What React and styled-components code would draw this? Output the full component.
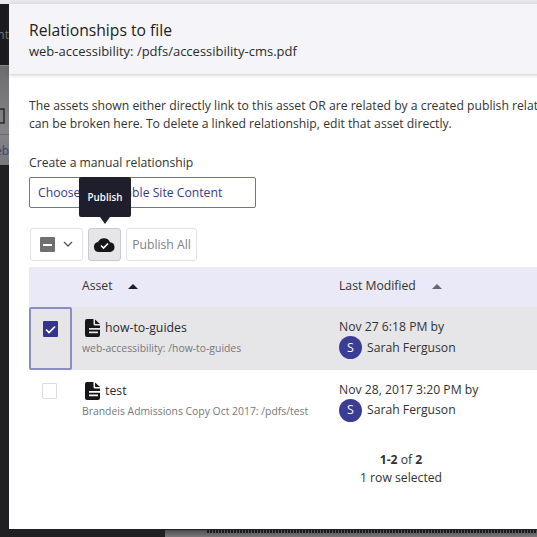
import React from 'react';
import styled, { createGlobalStyle } from 'styled-components';

const GlobalStyle = createGlobalStyle`
  html, body {
    margin: 0;
    padding: 0;
    width: 537px;
    height: 537px;
    overflow: hidden;
    background: #1f1f22;
  }
  * { box-sizing: border-box; }
`;

// Dimmed page behind the modal
const Page = styled.div`
  position: relative;
  width: 537px;
  height: 537px;
  overflow: hidden;
  background: #202023;
  font-family: 'Open Sans', 'Noto Sans', sans-serif;
  color: #2b2b2e;
`;

const BackdropTop = styled.div`
  position: absolute;
  left: 0;
  top: 0;
  right: 0;
  height: 4px;
  background: #e9e9ec;
`;

// Bits of the page under the modal that stick out on the left
const BackdropNav = styled.div`
  position: absolute;
  left: 0;
  top: 4px;
  width: 9px;
  height: 61px;
  overflow: hidden;
  background: #1b1b1f;
`;

const BackdropStrip = styled.div`
  position: absolute;
  left: 0;
  top: 65px;
  width: 9px;
  height: 100px;
  overflow: hidden;
  background: linear-gradient(#6d6d6f, #858587 68%, #77777f);
  border-top: 1px solid #8a898c;
`;

const BackdropDivider = styled.div`
  position: absolute;
  left: 0;
  right: 0;
  top: 68px;
  height: 1px;
  background: #6a6a6e;
`;

const BackdropText = styled.span`
  position: absolute;
  right: 0;
  top: ${({ $top }) => $top}px;
  font-size: 12px;
  line-height: 16px;
  white-space: nowrap;
  color: ${({ $color }) => $color};
`;

const BackdropIcon = styled.svg`
  position: absolute;
  left: -5px;
  top: 42px;
`;

const BackdropBottom = styled.div`
  position: absolute;
  left: 165px;
  right: 0;
  top: 530px;
  height: 7px;
  padding: 0 0 0 42px;
  background: linear-gradient(#4c4c4e, #7a7a7c);
  &::after {
    content: '';
    display: block;
    height: 3px;
    background: repeating-linear-gradient(90deg, #1c1c1e 0 2px, transparent 2px 3px);
  }
`;

const Modal = styled.div`
  position: absolute;
  left: 9px;
  top: 4px;
  width: 640px;
  height: 525px;
  background: #fff;
  display: flex;
  flex-direction: column;
`;

const ModalHeader = styled.header`
  height: 70px;
  padding: 15px 0 0 20px;
  background: #f5f5f9;
  box-shadow: 0 1px 4px rgba(60, 60, 70, 0.28);
`;

const Title = styled.h1`
  margin: 0;
  font-size: 15.7px;
  line-height: 22px;
  font-weight: 400;
  color: #222;
`;

const Subtitle = styled.div`
  font-size: 13px;
  line-height: 20px;
  color: #2b2b2e;
`;

const ModalBody = styled.div`
  padding: 23px 0 0 20px;
  display: flex;
  flex-direction: column;
`;

const Intro = styled.p`
  margin: 0;
  font-size: 12.2px;
  line-height: 18px;
  white-space: nowrap;
  color: #333;
`;

const FieldLabel = styled.label`
  display: block;
  margin-top: 21px;
  font-size: 12.2px;
  line-height: 18px;
  color: #333;
`;

const Picker = styled.div`
  width: 227px;
  height: 31px;
  margin-top: 5px;
  padding-left: 8px;
  border: 1px solid #6f70ad;
  border-radius: 2px;
  display: flex;
  align-items: center;
  font-size: 12.2px;
  color: #39398f;
`;

const Toolbar = styled.div`
  display: flex;
  gap: 5px;
  margin-top: 20px;
  padding-left: 1px;
`;

const ToolButton = styled.div`
  position: relative;
  height: 33px;
  width: ${({ $w }) => $w}px;
  border: 1px solid ${({ $active }) => ($active ? '#c9c9ce' : '#e2e2e6')};
  border-radius: 3px;
  background: ${({ $active }) => ($active ? '#e6e6e9' : '#fff')};
  display: flex;
  align-items: center;
  justify-content: center;
  gap: 8px;
  font-size: 12.2px;
  color: #808084;
`;

const IndeterminateBox = styled.span`
  width: 15px;
  height: 15px;
  border-radius: 1px;
  background: #707072;
  display: flex;
  align-items: center;
  justify-content: center;
  &::after {
    content: '';
    width: 9px;
    height: 2px;
    background: #fff;
  }
`;

const Tooltip = styled.div`
  position: absolute;
  left: 79px;
  top: 177px;
  width: 52px;
  height: 40px;
  border-radius: 2px;
  background: #1e1e2c;
  color: #fff;
  font-size: 9.8px;
  font-weight: 600;
  display: flex;
  align-items: center;
  justify-content: center;
  &::after {
    content: '';
    position: absolute;
    left: 21px;
    bottom: -7px;
    border-left: 5px solid transparent;
    border-right: 5px solid transparent;
    border-top: 7px solid #1e1e2c;
  }
`;

const Table = styled.div`
  width: 640px;
  margin-top: 6px;
`;

const Columns = 'grid-template-columns: 43px 267px 1fr;';

const HeadRow = styled.div`
  display: grid;
  ${Columns}
  height: 40px;
  padding-bottom: 4px;
  background: #e9e9f7;
  align-items: center;
  font-size: 12.2px;
  color: #333;
`;

const HeadCell = styled.div`
  grid-column: ${({ $col }) => $col};
  padding-left: ${({ $pad }) => $pad}px;
  display: flex;
  align-items: center;
  gap: ${({ $gap }) => $gap}px;
`;

const SortArrow = styled.span`
  width: 0;
  height: 0;
  margin-top: 2px;
  border-left: 5px solid transparent;
  border-right: 5px solid transparent;
  border-bottom: 5px solid ${({ $dim }) => ($dim ? '#66666c' : '#1f1f22')};
`;

const Row = styled.div`
  display: grid;
  ${Columns}
  height: 62.5px;
  background: ${({ $selected }) => ($selected ? '#e6e6e8' : '#fff')};
`;

const CheckCell = styled.div`
  padding: 13px 0 0 13px;
  ${({ $focus }) => $focus && 'border: 2px solid #8c8dc6; border-radius: 2px; padding: 12px 0 0 12px;'}
`;

const Checkbox = styled.span`
  width: 15px;
  height: 16px;
  border-radius: 1px;
  display: flex;
  align-items: center;
  justify-content: center;
  background: ${({ $checked }) => ($checked ? '#35358f' : '#fff')};
  border: ${({ $checked }) => ($checked ? 'none' : '1.5px solid #dcdce0')};
`;

const AssetCell = styled.div`
  padding: 11px 0 0 10px;
`;

const AssetName = styled.div`
  display: flex;
  align-items: center;
  gap: 5px;
  padding-left: 3px;
  font-size: 12.3px;
  line-height: 20px;
  color: #2b2b2e;
`;

const AssetPath = styled.div`
  margin-top: 2px;
  font-size: 10.4px;
  line-height: 16px;
  color: #77777b;
  white-space: nowrap;
`;

const ModifiedCell = styled.div`
  padding-top: 11px;
  font-size: 12.2px;
  line-height: 18px;
  color: #333;
`;

const UserLine = styled.div`
  display: flex;
  align-items: center;
  gap: 5px;
`;

const Avatar = styled.span`
  width: 23px;
  height: 23px;
  border-radius: 50%;
  background: #3b3d94;
  color: #fff;
  font-size: 12.4px;
  display: flex;
  align-items: center;
  justify-content: center;
`;

const Pager = styled.div`
  width: 140px;
  margin: 19px 0 0 302px;
  text-align: center;
  font-size: 12.2px;
  line-height: 18px;
  color: #333;
`;

const CloudCheck = () => (
  <svg width="21" height="14" viewBox="0 0 21 14" aria-hidden="true">
    <path
      fill="#17171a"
      d="M5 14a5 5 0 0 1-1-9.900A6.500 6.500 0 0 1 16 4.300 4.900 4.900 0 0 1 16.500 14z"
    />
    <path d="M7 7.500l2.500 2.500 4.500-4.500" fill="none" stroke="#fff" strokeWidth="1.600" />
  </svg>
);

const FileIcon = () => (
  <svg width="15" height="18" viewBox="0 0 15 18" aria-hidden="true">
    <path
      fill="#17171a"
      fillRule="evenodd"
      d="M2 0H8.500v5a1.500 1.500 0 0 0 1.500 1.500h5V16a2 2 0 0 1-2 2H2a2 2 0 0 1-2-2V2a2 2 0 0 1 2-2zM4 9v1.700h11V9zM4 12.500v1.700h9v-1.700z"
    />
    <path fill="#17171a" d="M10 0.500l5 4.500h-4.200a.8.8 0 0 1-.8-.8z" />
  </svg>
);

const Chevron = () => (
  <svg width="10" height="7" viewBox="0 0 10 7" aria-hidden="true">
    <path d="M1 1l4 4 4-4" fill="none" stroke="#55555a" strokeWidth="1.300" />
  </svg>
);

const CheckMark = () => (
  <svg width="11" height="9" viewBox="0 0 11 9" aria-hidden="true">
    <path d="M1 4.500l3 3 6-6" fill="none" stroke="#fff" strokeWidth="1.700" />
  </svg>
);

const rows = [
  {
    name: 'how-to-guides',
    path: 'web-accessibility: /how-to-guides',
    date: 'Nov 27 6:18 PM by',
    selected: true,
  },
  {
    name: 'test',
    path: 'Brandeis Admissions Copy Oct 2017: /pdfs/test',
    date: 'Nov 28, 2017 3:20 PM by',
    selected: false,
  },
];

const App = () => (
  <Page>
    <GlobalStyle />
    <BackdropTop />
    <BackdropNav>
      <BackdropText $top={23} $color="#77777a">nt</BackdropText>
    </BackdropNav>
    <BackdropStrip>
      <BackdropIcon width="10" height="16" viewBox="0 0 10 16" aria-hidden="true">
        <path d="M1 1h8v14H1z" fill="none" stroke="#2a2a2c" strokeWidth="1.500" />
      </BackdropIcon>
      <BackdropDivider />
      <BackdropText $top={77} $color="#43436c">eb</BackdropText>
    </BackdropStrip>
    <BackdropBottom />
    <Modal>
      <ModalHeader>
        <Title>Relationships to file</Title>
        <Subtitle>web-accessibility: /pdfs/accessibility-cms.pdf</Subtitle>
      </ModalHeader>
      <ModalBody>
        <Intro>
          The assets shown either directly link to this asset OR are related by a created publish relationship. Relationships
          <br />
          can be broken here. To delete a linked relationship, edit that asset directly.
        </Intro>
        <FieldLabel>Create a manual relationship</FieldLabel>
        <Picker>Choose Publishable Site Content</Picker>
        <Toolbar>
          <ToolButton $w={53}>
            <IndeterminateBox />
            <Chevron />
          </ToolButton>
          <ToolButton $w={33} $active>
            <CloudCheck />
          </ToolButton>
          <ToolButton $w={71}>Publish All</ToolButton>
        </Toolbar>
        <Table>
          <HeadRow>
            <HeadCell $col={2} $pad={10} $gap={15}>
              Asset <SortArrow />
            </HeadCell>
            <HeadCell $col={3} $pad={0} $gap={16}>
              Last Modified <SortArrow $dim />
            </HeadCell>
          </HeadRow>
          {rows.map((row) => (
            <Row key={row.name} $selected={row.selected}>
              <CheckCell $focus={row.selected}>
                <Checkbox $checked={row.selected}>{row.selected && <CheckMark />}</Checkbox>
              </CheckCell>
              <AssetCell>
                <AssetName>
                  <FileIcon />
                  {row.name}
                </AssetName>
                <AssetPath>{row.path}</AssetPath>
              </AssetCell>
              <ModifiedCell>
                {row.date}
                <UserLine>
                  <Avatar>S</Avatar>
                  Sarah Ferguson
                </UserLine>
              </ModifiedCell>
            </Row>
          ))}
          <Pager>
            <div>
              <b>1-2</b> of <b>2</b>
            </div>
            <div>1 row selected</div>
          </Pager>
        </Table>
      </ModalBody>
    </Modal>
    <Tooltip>Publish</Tooltip>
  </Page>
);

export default App;
